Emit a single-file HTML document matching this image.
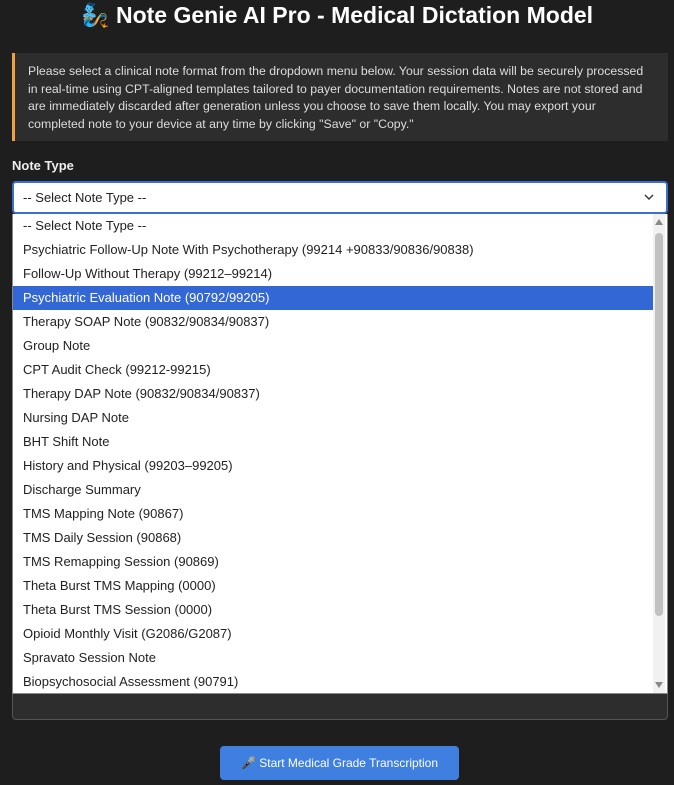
<!DOCTYPE html>
<html><head><meta charset="utf-8"><style>
*{box-sizing:border-box;margin:0;padding:0}
body{width:674px;height:785px;background:#1e1e1e;font-family:"Liberation Sans",sans-serif;position:relative;overflow:hidden;color:#fff}
h1{position:absolute;top:1px;left:0;width:674px;text-align:center;font-size:23px;font-weight:bold;line-height:28px}
.note{position:absolute;left:12px;top:53px;width:656px;height:88px;background:#2d2d2d;border-left:3px solid #f0a040;padding:10px 0 0 13px;font-size:12.3px;line-height:17.5px;color:#ddd;white-space:nowrap;overflow:hidden}
.lbl{position:absolute;left:12px;top:158px;font-size:13px;font-weight:bold;color:#eee}
.sel{position:absolute;left:12px;top:181px;width:656px;height:33px;background:#fff;border:2px solid #3b6fd0;border-radius:4px;color:#222;font-size:13px;padding:7px 0 0 9px}
.sel svg{position:absolute;right:12px;top:11px}
.ta{position:absolute;left:12px;top:660px;width:656px;height:60px;background:#2d2d2d;border:1px solid #555;border-radius:4px}
.list{position:absolute;left:12px;top:214px;width:656px;height:480px;background:#fff;border:1px solid #888;border-top:none}
.it{height:24px;line-height:24px;padding-left:10px;font-size:13px;color:#222;width:640px}
.it.s{background:#3367d6;color:#fff}
.sb{position:absolute;right:2px;top:0;width:12px;height:479px;background:#f1f1f1}
.th{position:absolute;left:2px;top:19px;width:8px;height:383px;background:#c1c1c1;border-radius:4px}
.btn{position:absolute;left:220px;top:746px;width:239px;height:34px;background:#3f7fdf;border-radius:4px;font-size:12px;color:#fff;text-align:center;line-height:34px}
</style></head><body>
<h1>🧞 Note Genie AI Pro - Medical Dictation Model</h1>
<div class="note">Please select a clinical note format from the dropdown menu below. Your session data will be securely processed<br>in real-time using CPT-aligned templates tailored to payer documentation requirements. Notes are not stored and<br>are immediately discarded after generation unless you choose to save them locally. You may export your<br>completed note to your device at any time by clicking "Save" or "Copy."</div>
<div class="lbl">Note Type</div>
<div class="sel">-- Select Note Type --<svg width="10" height="7" viewBox="0 0 10 7"><path d="M1 1l4 4 4-4" stroke="#333" stroke-width="1.4" fill="none"/></svg></div>
<div class="ta"></div>
<div class="list">
<div class="it">-- Select Note Type --</div>
<div class="it">Psychiatric Follow-Up Note With Psychotherapy (99214 +90833/90836/90838)</div>
<div class="it">Follow-Up Without Therapy (99212–99214)</div>
<div class="it s">Psychiatric Evaluation Note (90792/99205)</div>
<div class="it">Therapy SOAP Note (90832/90834/90837)</div>
<div class="it">Group Note</div>
<div class="it">CPT Audit Check (99212-99215)</div>
<div class="it">Therapy DAP Note (90832/90834/90837)</div>
<div class="it">Nursing DAP Note</div>
<div class="it">BHT Shift Note</div>
<div class="it">History and Physical (99203–99205)</div>
<div class="it">Discharge Summary</div>
<div class="it">TMS Mapping Note (90867)</div>
<div class="it">TMS Daily Session (90868)</div>
<div class="it">TMS Remapping Session (90869)</div>
<div class="it">Theta Burst TMS Mapping (0000)</div>
<div class="it">Theta Burst TMS Session (0000)</div>
<div class="it">Opioid Monthly Visit (G2086/G2087)</div>
<div class="it">Spravato Session Note</div>
<div class="it">Biopsychosocial Assessment (90791)</div>
<div class="sb"><div style="position:absolute;left:2px;top:5px;border:4px solid transparent;border-bottom:6px solid #888;border-top:none"></div><div class="th"></div><div style="position:absolute;left:2px;bottom:5px;border:4px solid transparent;border-top:6px solid #888;border-bottom:none"></div></div>
</div>
<div class="btn">🎤 Start Medical Grade Transcription</div>
</body></html>
